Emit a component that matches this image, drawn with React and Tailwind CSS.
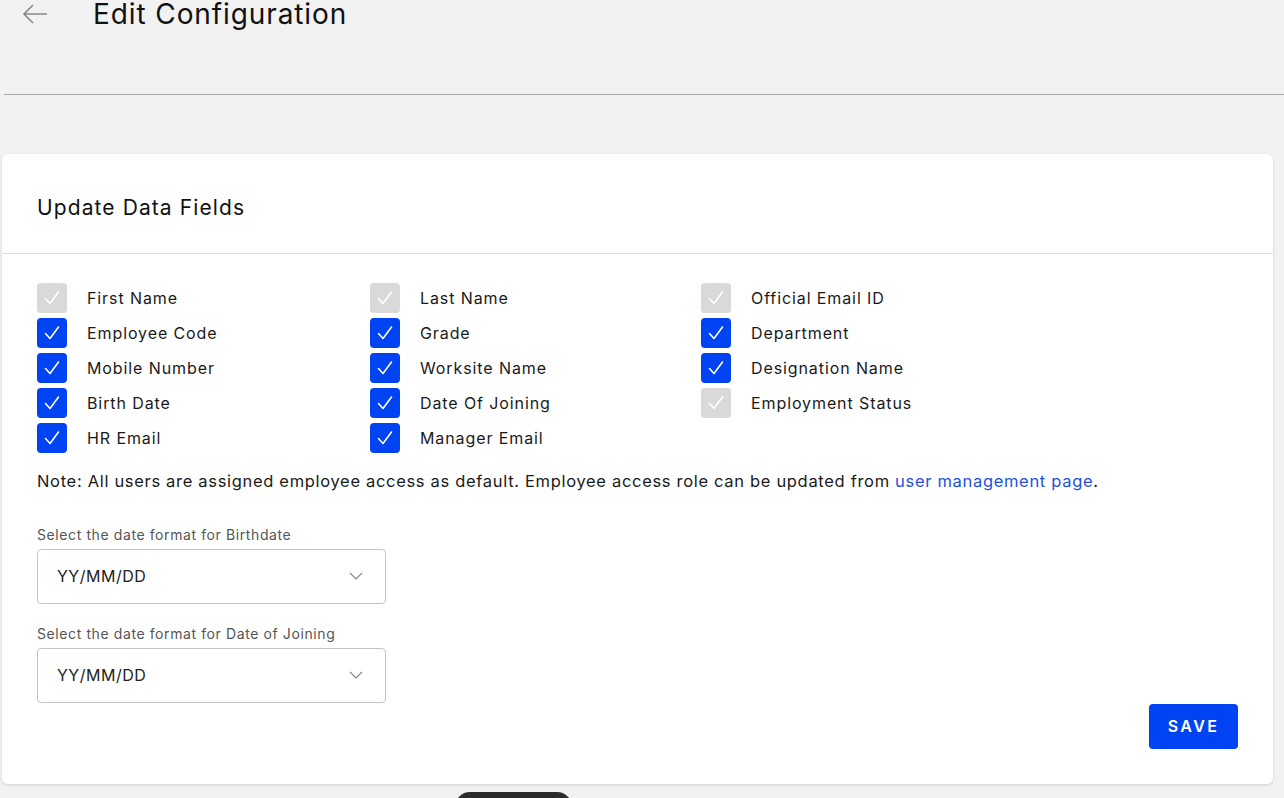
import React, { useState } from "react";

const fields = [
  ["First Name", false], ["Last Name", false], ["Official Email ID", false],
  ["Employee Code", true], ["Grade", true], ["Department", true],
  ["Mobile Number", true], ["Worksite Name", true], ["Designation Name", true],
  ["Birth Date", true], ["Date Of Joining", true], ["Employment Status", false],
  ["HR Email", true], ["Manager Email", true],
];

const Check = ({ on }) => (
  <span className={`flex h-[30px] w-[30px] items-center justify-center rounded-[4px] ${on ? "bg-[#0043f2]" : "bg-[#d9d9d9]"}`}>
    <svg width="20" height="20" viewBox="0 0 20 20" fill="none">
      <path d="M3.5 10.5l4.5 5L16.5 4" stroke="white" strokeWidth="1.6" strokeLinecap="round" strokeLinejoin="round" />
    </svg>
  </span>
);

const Select = ({ label, value }) => (
  <div className="flex flex-col">
    <span className="text-[14px] leading-[20px] tracking-[0.6px] text-[#555]">{label}</span>
    <div className="mt-[4px] flex h-[55px] w-[349px] items-center justify-between rounded-[4px] border border-[#c4c4c4] pl-[19px] pr-[22px]">
      <span className="text-[16px] tracking-[0.5px] text-[#222]">{value}</span>
      <svg width="14" height="8" viewBox="0 0 14 8" fill="none">
        <path d="M1 1l6 6 6-6" stroke="#888" strokeWidth="1.2" />
      </svg>
    </div>
  </div>
);

const App = () => {
  const [items] = useState(fields);
  return (
    <div className="relative h-[798px] overflow-hidden bg-[#f2f2f2] font-['Inter',sans-serif] text-[#1a1a1a]">
      <div className="ml-[4px] flex h-[95px] items-start border-b border-[#a8a8a8]">
        <div className="-mt-[9px] flex items-center">
          <svg className="ml-[16px]" width="30" height="30" viewBox="0 0 30 30" fill="none">
            <path d="M27 15H4M13 6l-9 9 9 9" stroke="#8a8a8a" strokeWidth="1.6" />
          </svg>
          <h1 className="ml-[43px] text-[28px] font-normal leading-[46px] tracking-[0.9px] text-[#111]">Edit Configuration</h1>
        </div>
      </div>

      <div className="ml-[2px] mt-[59px] w-[1271px] rounded-[6px] bg-white shadow-[0_1px_3px_rgba(0,0,0,0.15)]">
        <div className="flex h-[100px] items-center border-b border-[#dedede] pl-[35px] pt-[8px]">
          <h2 className="text-[21px] font-normal tracking-[1.1px] text-[#111]">Update Data Fields</h2>
        </div>
        <div className="px-[35px] pt-[29px] pb-[35px]">
          <div className="grid grid-cols-[333px_331px_1fr] gap-y-[5px]">
            {items.map(([name, on]) => (
              <div key={name} className="flex items-center">
                <Check on={on} />
                <span className="ml-[20px] text-[16px] tracking-[0.9px] text-[#1a1a1a]">{name}</span>
              </div>
            ))}
          </div>
          <p className="mt-[16px] text-[16.5px] tracking-[0.68px] text-[#1a1a1a]">
            Note: All users are assigned employee access as default. Employee access role can be updated from{" "}
            <a className="text-[#1f4fe0]">user management page</a>.
          </p>
          <div className="mt-[31px] flex flex-col gap-[20px]">
            <Select label="Select the date format for Birthdate" value="YY/MM/DD" />
            <Select label="Select the date format for Date of Joining" value="YY/MM/DD" />
          </div>
          <div className="mt-[1px] flex justify-end">
            <button className="h-[45px] w-[89px] rounded-[4px] bg-[#0043f2] text-[16px] font-semibold tracking-[2.4px] text-white">
              SAVE
            </button>
          </div>
        </div>
      </div>

      <div className="absolute left-[455px] top-[792px] h-[30px] w-[117px] rounded-full bg-[#2b2b2b]" />
    </div>
  );
};

export default App;
